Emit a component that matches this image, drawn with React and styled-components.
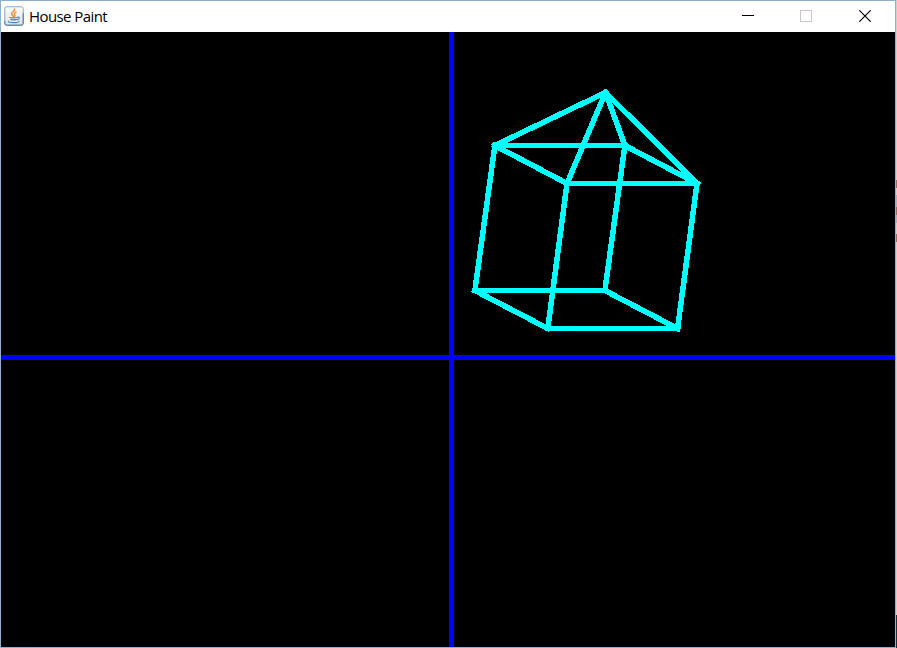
import React from "react";
import styled, { createGlobalStyle } from "styled-components";

const GlobalStyle = createGlobalStyle`
  html, body { margin: 0; padding: 0; overflow: hidden; background: #ccc; }
`;

const Desktop = styled.div`
  display: flex;
  width: 897px;
  height: 648px;
`;

const WindowFrame = styled.main`
  box-sizing: border-box;
  display: flex;
  flex-direction: column;
  width: 896px;
  height: 648px;
  border: 1px solid #8ab0d2;
  background: #000;
`;

const TitleBar = styled.header`
  display: flex;
  align-items: center;
  flex: none;
  height: 31px;
  background: #fff;
`;

const AppIcon = styled.svg`
  display: block;
  flex: none;
  width: 20px;
  height: 20px;
  margin: 0 0 1px 3px;
`;

const Title = styled.h1`
  margin: 0 auto 1px 5px;
  font: 400 15px/20px "Open Sans", "Noto Sans", sans-serif;
  letter-spacing: -0.58px;
  color: #000;
  white-space: nowrap;
`;

const WindowButton = styled.button`
  box-sizing: border-box;
  display: flex;
  align-items: center;
  justify-content: center;
  width: ${(p) => p.$width}px;
  height: 31px;
  padding: 0 0 1px;
  border: 0;
  background: transparent;
  color: ${(p) => (p.disabled ? "#c8c8c8" : "#000")};
`;

const Glyph = styled.svg`
  display: block;
  width: 12px;
  height: 12px;
  fill: none;
  stroke: currentColor;
`;

const Canvas = styled.svg`
  display: block;
  width: 894px;
  height: 615px;
  background: #000;
  shape-rendering: crispEdges;
`;

const DesktopEdge = styled.aside`
  display: flex;
  flex-direction: column;
  width: 1px;
  height: 648px;
`;

const EdgeStrip = styled.div`
  flex: none;
  width: 1px;
  height: ${(p) => p.$height}px;
  background: ${(p) => p.$color};
`;

const strips = [
  [180, "#d0d0d0"], [8, "#8c6f65"], [7, "#d0d0d0"], [12, "#a5b0b8"],
  [8, "#8c6f65"], [8, "#a5b0b8"], [11, "#d0d0d0"], [8, "#8c6f65"],
  [373, "#d0d0d0"], [33, "#16323f"],
];

const vertices = {
  apex: [605.5, 92.5],
  backLeft: [494.9, 145.5],
  backRight: [624.9, 145.5],
  frontLeft: [567, 183.5],
  frontRight: [697, 183.5],
  baseBackLeft: [474.9, 290.5],
  baseBackRight: [604.9, 290.5],
  baseFrontLeft: [547.8, 328.5],
  baseFrontRight: [677.6, 328.5],
};

const edges = [
  ["backLeft", "backRight"], ["backRight", "frontRight"],
  ["frontLeft", "frontRight"], ["backLeft", "frontLeft"],
  ["baseBackLeft", "baseBackRight"], ["baseBackRight", "baseFrontRight"],
  ["baseFrontLeft", "baseFrontRight"], ["baseBackLeft", "baseFrontLeft"],
  ["backLeft", "baseBackLeft"], ["backRight", "baseBackRight"],
  ["frontLeft", "baseFrontLeft"], ["frontRight", "baseFrontRight"],
  ["apex", "backLeft"], ["apex", "backRight"],
  ["apex", "frontLeft"], ["apex", "frontRight"],
];

const edgeWidth = (a, b) => (vertices[a][1] === vertices[b][1] ? 5 : 5.5);

function JavaIcon() {
  return (
    <AppIcon viewBox="0 0 20 20" aria-hidden="true">
      <defs>
        <linearGradient id="tile" x2="0" y2="1">
          <stop stopColor="#fdfdfd" />
          <stop offset="1" stopColor="#dce2e8" />
        </linearGradient>
      </defs>
      <rect x="0.75" y="0.75" width="18.5" height="18.5" rx="2" fill="url(#tile)" stroke="#8fa5b7" />
      <path d="M.8 15V17.2Q.8 19.2 2.8 19.2H17.2Q19.2 19.2 19.2 17.2V7" fill="none" stroke="#527796" />
      <g fill="none" strokeLinecap="round">
        <path d="M10.5 3C11.5 5.3 7 6 7.5 8C7.8 9.2 9.2 9.4 9.3 10.4M12 6.2C9.6 7.4 10 8.3 10.8 9.1C11.2 9.7 10.8 10.2 10.2 10.7" stroke="#eb8a35" strokeWidth="1.4" />
        <path d="M5.7 11.5Q9.5 12.4 13 11.5M6.8 13.4Q9.8 14.4 12.4 13.4M13.2 11.2C16.4 10.4 15.8 13.2 13.2 13.6M4.5 15.2C3.4 17 14.6 17.2 15 15.3" stroke="#5e86a6" strokeWidth="1.15" />
      </g>
    </AppIcon>
  );
}

export default function App() {
  return (
    <>
      <GlobalStyle />
      <Desktop>
        <WindowFrame>
          <TitleBar>
            <JavaIcon />
            <Title>House Paint</Title>
            <WindowButton $width={58} aria-label="Minimize">
              <Glyph viewBox="0 0 12 12"><path d="M0 5.5H12" shapeRendering="crispEdges" /></Glyph>
            </WindowButton>
            <WindowButton $width={58} disabled aria-label="Maximize">
              <Glyph viewBox="0 0 12 12"><path d="M.5 .5H11.5V11.5H.5Z" shapeRendering="crispEdges" /></Glyph>
            </WindowButton>
            <WindowButton $width={60} aria-label="Close">
              <Glyph viewBox="0 0 12 12"><path d="M.3 .3L11.7 11.7M11.7 .3L.3 11.7" strokeWidth="1.15" /></Glyph>
            </WindowButton>
          </TitleBar>
          <Canvas viewBox="1 32 894 615" role="img" aria-label="Wireframe house">
            <path d="M451.5 32V647M1 357.5H895" stroke="#00f" strokeWidth="5" />
            <g stroke="#0ff" strokeLinecap="square">
              {edges.map(([a, b]) => (
                <line
                  key={a + b}
                  x1={vertices[a][0]}
                  y1={vertices[a][1]}
                  x2={vertices[b][0]}
                  y2={vertices[b][1]}
                  strokeWidth={edgeWidth(a, b)}
                />
              ))}
            </g>
          </Canvas>
        </WindowFrame>
        <DesktopEdge>
          {strips.map(([height, color], i) => <EdgeStrip key={i} $height={height} $color={color} />)}
        </DesktopEdge>
      </Desktop>
    </>
  );
}
